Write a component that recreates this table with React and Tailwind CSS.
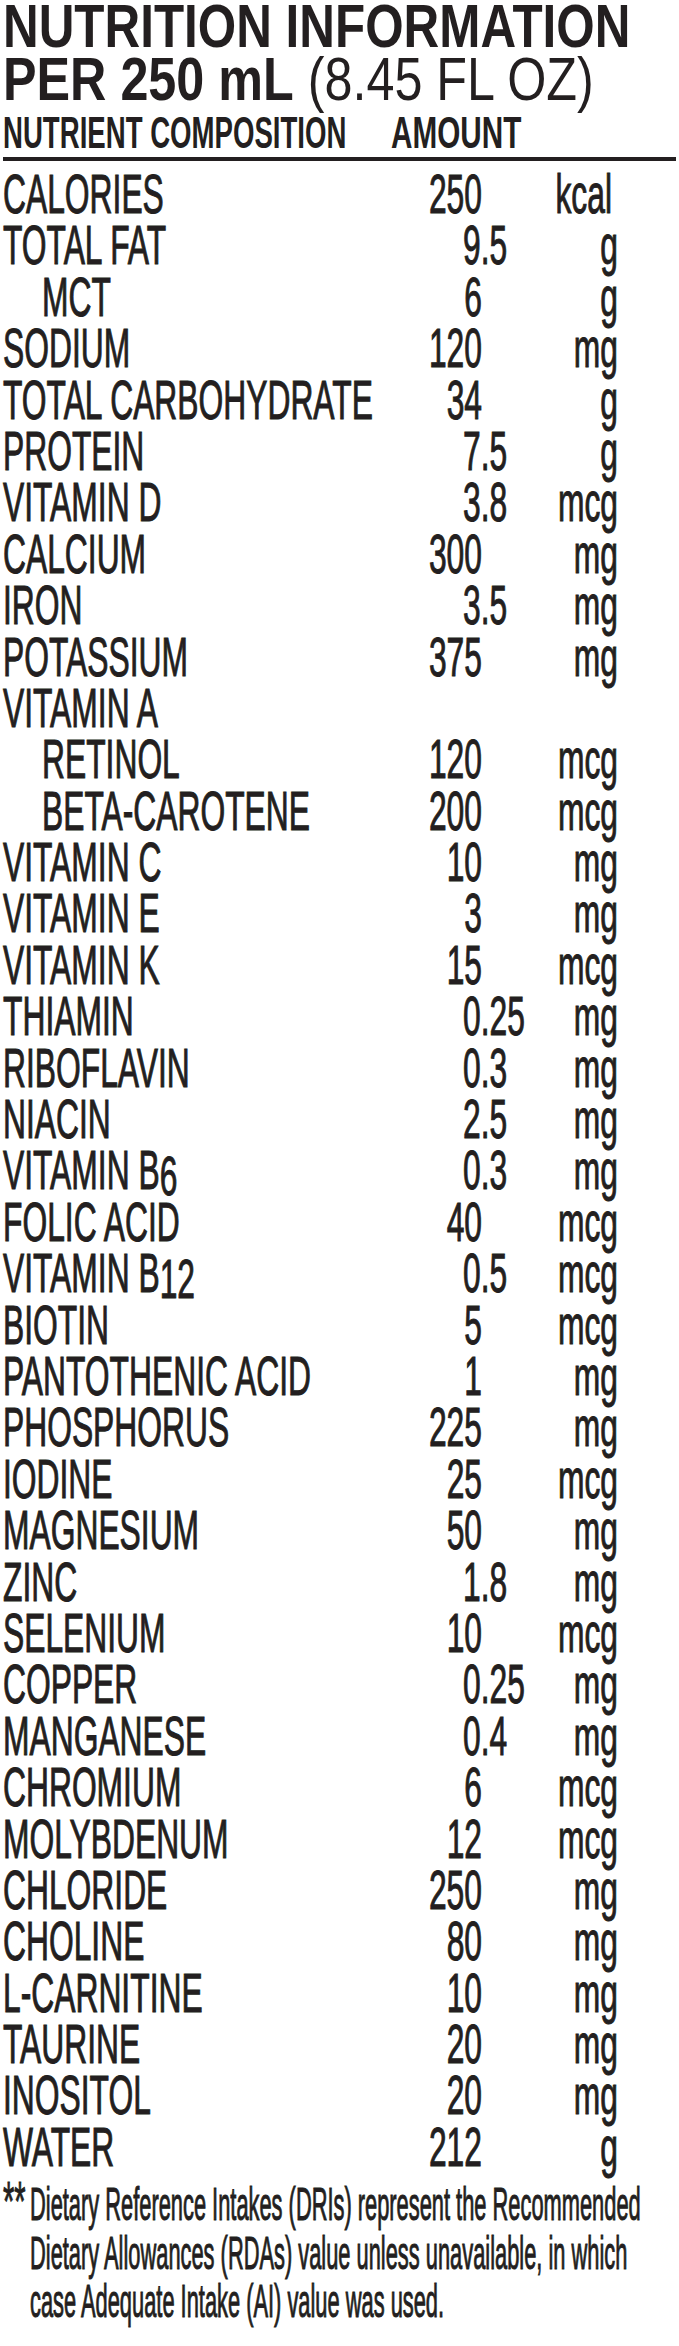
import React from 'react'

const nutrients = [
  { name: 'CALORIES', amount: '250', unit: 'kcal' },
  { name: 'TOTAL FAT', amount: '9.5', unit: 'g' },
  { name: 'MCT', amount: '6', unit: 'g', indent: true },
  { name: 'SODIUM', amount: '120', unit: 'mg' },
  { name: 'TOTAL CARBOHYDRATE', amount: '34', unit: 'g' },
  { name: 'PROTEIN', amount: '7.5', unit: 'g' },
  { name: 'VITAMIN D', amount: '3.8', unit: 'mcg' },
  { name: 'CALCIUM', amount: '300', unit: 'mg' },
  { name: 'IRON', amount: '3.5', unit: 'mg' },
  { name: 'POTASSIUM', amount: '375', unit: 'mg' },
  { name: 'VITAMIN A' },
  { name: 'RETINOL', amount: '120', unit: 'mcg', indent: true },
  { name: 'BETA-CAROTENE', amount: '200', unit: 'mcg', indent: true },
  { name: 'VITAMIN C', amount: '10', unit: 'mg' },
  { name: 'VITAMIN E', amount: '3', unit: 'mg' },
  { name: 'VITAMIN K', amount: '15', unit: 'mcg' },
  { name: 'THIAMIN', amount: '0.25', unit: 'mg' },
  { name: 'RIBOFLAVIN', amount: '0.3', unit: 'mg' },
  { name: 'NIACIN', amount: '2.5', unit: 'mg' },
  { name: 'VITAMIN B', sub: '6', amount: '0.3', unit: 'mg' },
  { name: 'FOLIC ACID', amount: '40', unit: 'mcg' },
  { name: 'VITAMIN B', sub: '12', amount: '0.5', unit: 'mcg' },
  { name: 'BIOTIN', amount: '5', unit: 'mcg' },
  { name: 'PANTOTHENIC ACID', amount: '1', unit: 'mg' },
  { name: 'PHOSPHORUS', amount: '225', unit: 'mg' },
  { name: 'IODINE', amount: '25', unit: 'mcg' },
  { name: 'MAGNESIUM', amount: '50', unit: 'mg' },
  { name: 'ZINC', amount: '1.8', unit: 'mg' },
  { name: 'SELENIUM', amount: '10', unit: 'mcg' },
  { name: 'COPPER', amount: '0.25', unit: 'mg' },
  { name: 'MANGANESE', amount: '0.4', unit: 'mg' },
  { name: 'CHROMIUM', amount: '6', unit: 'mcg' },
  { name: 'MOLYBDENUM', amount: '12', unit: 'mcg' },
  { name: 'CHLORIDE', amount: '250', unit: 'mg' },
  { name: 'CHOLINE', amount: '80', unit: 'mg' },
  { name: 'L-CARNITINE', amount: '10', unit: 'mg' },
  { name: 'TAURINE', amount: '20', unit: 'mg' },
  { name: 'INOSITOL', amount: '20', unit: 'mg' },
  { name: 'WATER', amount: '212', unit: 'g' },
]

const footnote = [
  'Dietary Reference Intakes (DRIs) represent the Recommended',
  'Dietary Allowances (RDAs) value unless unavailable, in which',
  'case Adequate Intake (AI) value was used.',
]

// The label face is a tall condensed grotesque: a small size of Liberation
// Sans stretched vertically from its baseline gives the same proportions.

function Amount({ value }) {
  if (!value) return <div className="w-[160px] shrink-0" />
  // decimals line up on their left edge, whole numbers on the right
  if (value.includes('.')) {
    return <div className="w-[160px] shrink-0 pl-[123px]">{value}</div>
  }
  return <div className="w-[160px] shrink-0 pr-[18px] text-right">{value}</div>
}

function NutrientRow({ row }) {
  return (
    <div className="h-[51.4px] pt-[18px]">
      <div className="flex origin-[50%_26.9px] scale-y-[1.73] whitespace-nowrap text-[31.8px] leading-none [-webkit-text-stroke:0.6px]">
        <div className={row.indent ? 'w-[340px] shrink-0 pl-[42px]' : 'w-[340px] shrink-0 pl-[3px]'}>
          {row.name}
          {row.sub && <span className="relative top-[3px]">{row.sub}</span>}
        </div>
        <Amount value={row.amount} />
        <div className={row.unit === 'kcal' ? 'flex-1 pr-[67px] text-right' : 'flex-1 pr-[61px] text-right'}>
          {row.unit}
        </div>
      </div>
    </div>
  )
}

export default function App() {
  return (
    <div className="min-h-[2346px] w-[679px] bg-white font-['Liberation_Sans',Arial,sans-serif] text-[#231f20]">
      {/* Title */}
      <div className="pl-[3px]">
        <div className="h-[52px] pt-[5.3px]">
          <div className="origin-[0_41.8px] scale-y-[1.235] whitespace-nowrap text-[49.4px] font-bold leading-none">
            NUTRITION INFORMATION
          </div>
        </div>
        <div className="h-[54px] pt-[5.5px]">
          <div className="origin-[0_42.6px] scale-y-[1.212] whitespace-nowrap text-[50.3px] leading-none">
            <span className="font-bold">PER 250 mL</span> (8.45 FL OZ)
          </div>
        </div>
        <div className="flex h-[51px] whitespace-nowrap font-bold leading-none">
          <div className="w-[388px] shrink-0 pt-[18.7px]">
            <div className="origin-[0_23.4px] scale-y-[1.631] text-[27.6px]">NUTRIENT COMPOSITION</div>
          </div>
          <div className="pt-[17px]">
            <div className="origin-[0_25.1px] scale-y-[1.515] text-[29.7px]">AMOUNT</div>
          </div>
        </div>
      </div>
      <div className="mx-[3px] h-[4px] bg-[#231f20]" />

      {/* Nutrient table */}
      <div className="mt-[9px] flex flex-col">
        {nutrients.map((row, i) => (
          <NutrientRow key={i} row={row} />
        ))}
      </div>

      {/* Footnote */}
      <div className="mt-[7px] flex pl-[3px] whitespace-nowrap leading-none [-webkit-text-stroke:0.5px]">
        <div className="w-[27px] shrink-0 pt-[15.6px]">
          <div className="origin-[0_24.6px] scale-y-[1.923] text-[29.1px]">**</div>
        </div>
        <div className="flex flex-col">
          {footnote.map(line => (
            <div key={line} className="h-[48.6px] pt-[21.75px]">
              <div className="origin-[0_18.5px] scale-y-[2.105] text-[21.85px]">{line}</div>
            </div>
          ))}
        </div>
      </div>
    </div>
  )
}
